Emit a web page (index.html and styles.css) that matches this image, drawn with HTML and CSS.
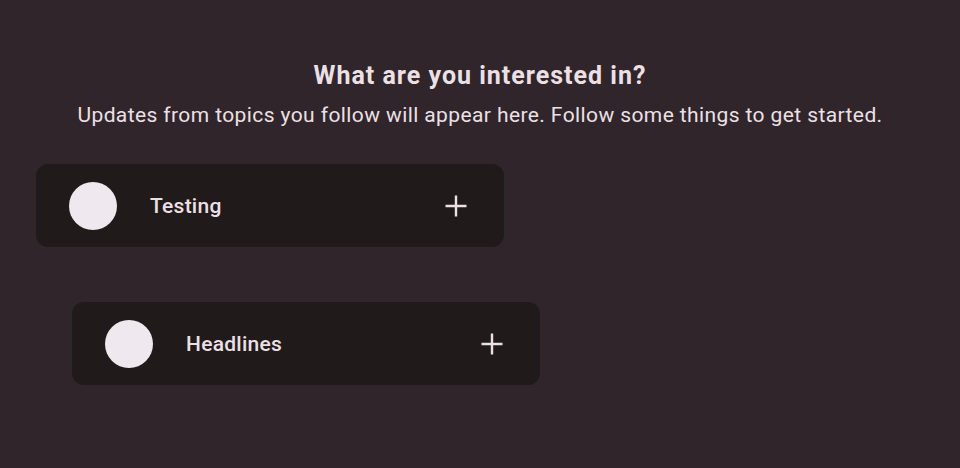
FILE: index.html
```html
<!DOCTYPE html>
<html>
<head>
<meta charset="utf-8">
<link rel="stylesheet" href="styles.css">
</head>
<body>
<main class="page">
  <header class="intro">
    <h1 class="title">What are you interested in?</h1>
    <p class="subtitle">Updates from topics you follow will appear here. Follow some things to get started.</p>
  </header>
  <section class="topics">
    <div class="topic">
      <span class="avatar"></span>
      <span class="name">Testing</span>
      <svg class="add" viewBox="0 0 24 24" width="36" height="36"><path d="M12 5v14M5 12h14" stroke="currentColor" stroke-width="1.6" fill="none"/></svg>
    </div>
    <div class="topic topic-shift">
      <span class="avatar"></span>
      <span class="name">Headlines</span>
      <svg class="add" viewBox="0 0 24 24" width="36" height="36"><path d="M12 5v14M5 12h14" stroke="currentColor" stroke-width="1.6" fill="none"/></svg>
    </div>
  </section>
</main>
</body>
</html>
```
FILE: styles.css
```css
html, body {
  margin: 0;
  padding: 0;
  background: #2f252b;
  height: 100%;
}
body {
  font-family: Roboto, "Noto Sans", sans-serif;
  color: #ede0e4;
}
.page {
  padding-top: 60px;
}
.intro {
  text-align: center;
}
.title {
  margin: 0;
  font-size: 25px;
  font-weight: 700;
  line-height: 32px;
  letter-spacing: 1px;
}
.subtitle {
  margin: 11px 0 0;
  font-size: 21px;
  line-height: 24px;
  letter-spacing: 0.4px;
}
.topics {
  display: flex;
  flex-direction: column;
  align-items: flex-start;
  gap: 55px;
  padding: 0 36px;
  margin-top: 37px;
}
.topic {
  width: 468px;
  height: 83px;
  box-sizing: border-box;
  background: #201a1b;
  border-radius: 12px;
  display: flex;
  align-items: center;
  padding: 0 30px 0 33px;
}
.topic-shift {
  margin-left: 36px;
}
.avatar {
  width: 48px;
  height: 48px;
  border-radius: 50%;
  background: #efe8ee;
  flex: none;
}
.name {
  flex: 1;
  margin-left: 33px;
  font-size: 21px;
  font-weight: 500;
  letter-spacing: 0.25px;
}
.add {
  color: #ede0e4;
  flex: none;
}
```
